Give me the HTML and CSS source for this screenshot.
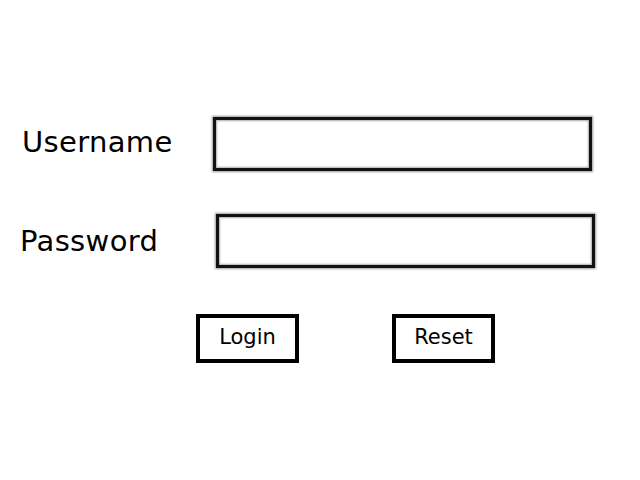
FILE: index.html
```html
<!DOCTYPE html>
<html lang="en">
<head>
    <meta charset="UTF-8">
    <meta name="viewport" content="width=device-width, initial-scale=1.0">
    <title>Login</title>
    <link rel="stylesheet" href="styles.css">
</head>
<body>
    <form class="login-form">
        <div class="field field-user">
            <label for="username">Username</label>
            <input type="text" id="username">
        </div>
        <div class="field field-pass">
            <label for="password">Password</label>
            <input type="password" id="password">
        </div>
        <div class="actions">
            <button type="button" class="btn">Login</button>
            <button type="reset" class="btn">Reset</button>
        </div>
    </form>
</body>
</html>
```

FILE: styles.css
```css
body {
    margin: 0;
    font-family: 'DejaVu Sans', Verdana, sans-serif;
    color: #000;
    background: #fff;
}
.login-form {
    padding-top: 117px;
}
.field {
    display: flex;
    align-items: center;
    height: 54px;
    margin-bottom: 43px;
}
.field-user {
    padding-left: 22px;
}
.field-pass {
    padding-left: 20px;
}
.field label {
    font-size: 29px;
    letter-spacing: 0.35px;
}
.field-user label {
    width: 191px;
    padding-bottom: 4px;
}
.field-pass label {
    width: 196px;
}
.field input {
    box-sizing: border-box;
    width: 379px;
    height: 54px;
    border: 3px solid #111;
    background: #fff;
    box-shadow: 0 0 2px 1px #999, inset 0 0 2px 1px #aaa;
    outline: none;
}
.actions {
    display: flex;
    gap: 93px;
    padding-left: 196px;
    margin-top: 46px;
}
.btn {
    box-sizing: border-box;
    width: 103px;
    height: 49px;
    border: 4px solid #000;
    background: #fff;
    font-family: 'DejaVu Sans', Verdana, sans-serif;
    font-size: 21px;
    color: #000;
    padding: 0 0 4px;
}
```
